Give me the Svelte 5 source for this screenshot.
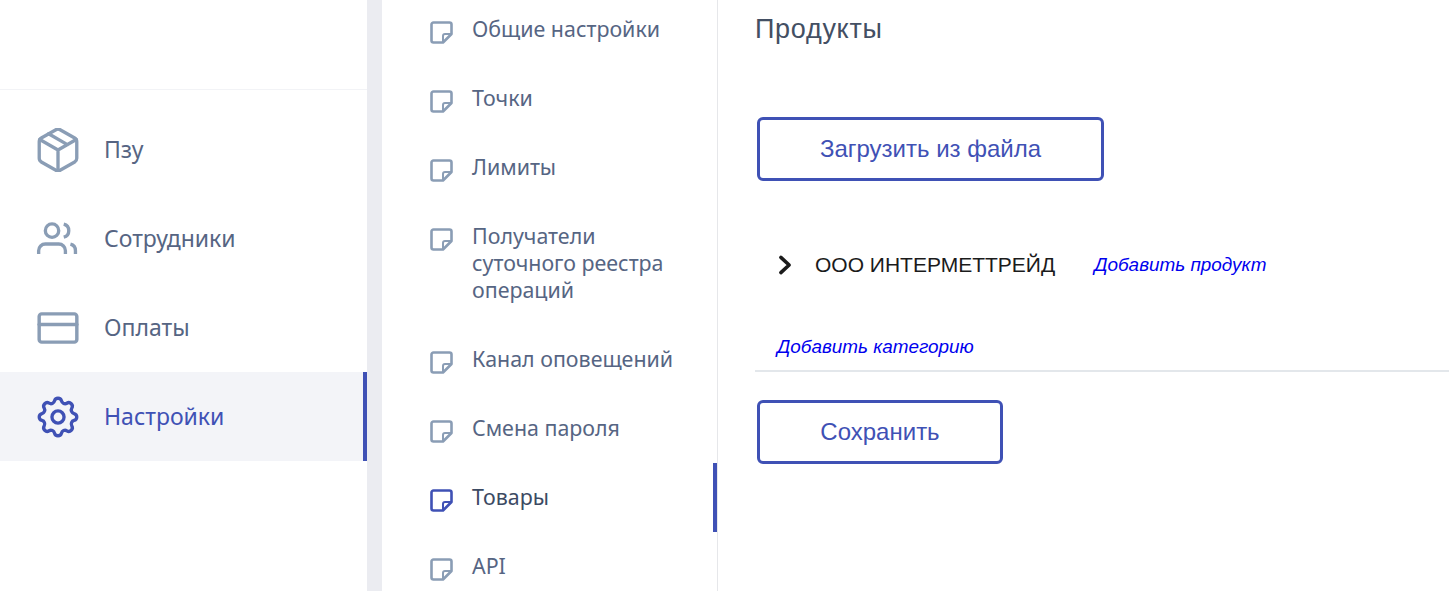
<script>
    const mainMenu = [
        { label: 'Пзу', icon: 'box', box: '1.45 1.45 21.1 21.1' },
        { label: 'Сотрудники', icon: 'users', box: '-0.58 -1.15 26.3 26.3' },
        { label: 'Оплаты', icon: 'card', box: '-0.85 -0.85 25.7 25.7' },
        { label: 'Настройки', icon: 'gear', box: '1.45 1.45 21.1 21.1', active: true },
    ];

    const subMenu = [
        { label: 'Общие настройки' },
        { label: 'Точки' },
        { label: 'Лимиты' },
        { label: 'Получатели суточного реестра операций' },
        { label: 'Канал оповещений' },
        { label: 'Смена пароля' },
        { label: 'Товары', active: true },
        { label: 'API' },
    ];
</script>

<div class="page">
    <aside class="sidebar">
        <nav class="main-menu">
            {#each mainMenu as item}
                <div class="main-item" class:active={item.active}>
                    <svg class="main-icon" viewBox={item.box} fill="none" stroke="currentColor" stroke-width="1.6" stroke-linecap="round" stroke-linejoin="round">
                        {#if item.icon === 'box'}
                            <path d="M21 16V8a2 2 0 0 0-1-1.730l-7-4a2 2 0 0 0-2 0l-7 4A2 2 0 0 0 3 8v8a2 2 0 0 0 1 1.730l7 4a2 2 0 0 0 2 0l7-4A2 2 0 0 0 21 16z" />
                            <path d="M3.270 6.960 12 12.010l8.730-5.050M12 22.080V12M7.500 4.210l9 5.190" />
                        {:else if item.icon === 'users'}
                            <g stroke-width="2" stroke-linecap="butt">
                                <circle cx="9" cy="7" r="4" />
                                <path d="M17 21v-2a4 4 0 0 0-4-4H5a4 4 0 0 0-4 4v2" />
                                <path d="M23 21v-2a4 4 0 0 0-3-3.870M16 3.130a4 4 0 0 1 0 7.750" />
                            </g>
                        {:else if item.icon === 'card'}
                            <g stroke-width="2">
                                <rect x="1" y="3.750" width="22" height="16.500" rx="1.500" />
                                <path d="M1 10h22" />
                            </g>
                        {:else}
                            <circle cx="12" cy="12" r="2.900" />
                            <path d="M10.325 4.317c.426-1.756 2.924-1.756 3.350 0a1.724 1.724 0 0 0 2.573 1.066c1.543-.94 3.310.826 2.370 2.370a1.724 1.724 0 0 0 1.065 2.572c1.756.426 1.756 2.924 0 3.350a1.724 1.724 0 0 0-1.066 2.573c.94 1.543-.826 3.310-2.370 2.370a1.724 1.724 0 0 0-2.572 1.065c-.426 1.756-2.924 1.756-3.350 0a1.724 1.724 0 0 0-2.573-1.066c-1.543.94-3.310-.826-2.370-2.370a1.724 1.724 0 0 0-1.065-2.572c-1.756-.426-1.756-2.924 0-3.350a1.724 1.724 0 0 0 1.066-2.573c-.94-1.543.826-3.310 2.370-2.370.996.608 2.296.07 2.572-1.065z" />
                        {/if}
                    </svg>
                    <span>{item.label}</span>
                </div>
            {/each}
        </nav>
    </aside>

    <div class="strip"></div>

    <nav class="sub-menu">
        {#each subMenu as item}
            <div class="sub-item" class:active={item.active}>
                <svg class="sub-icon" viewBox="0 0 23 23" fill="none" stroke="currentColor" stroke-width="2.600" stroke-linejoin="round">
                    <path d="M13 21.500H3.500a2 2 0 0 1-2-2v-16a2 2 0 0 1 2-2h16a2 2 0 0 1 2 2V13z" />
                    <path d="M21.500 13H15a2 2 0 0 0-2 2v6.500" stroke-width="2" />
                </svg>
                <span>{item.label}</span>
            </div>
        {/each}
    </nav>

    <main class="content">
        <h1>Продукты</h1>
        <button class="btn upload">Загрузить из файла</button>
        <div class="company">
            <svg class="chevron" viewBox="0 0 12 16" fill="none" stroke="currentColor" stroke-width="2.600" stroke-linecap="round" stroke-linejoin="round">
                <path d="M3 2.500 9 8l-6 5.500" />
            </svg>
            <span class="company-name">ООО ИНТЕРМЕТТРЕЙД</span>
            <a class="link" href="#add-product">Добавить продукт</a>
        </div>
        <div class="category">
            <a class="link" href="#add-category">Добавить категорию</a>
        </div>
        <button class="btn save">Сохранить</button>
    </main>
</div>

<style>
    :global(body) {
        margin: 0;
        background: #fff;
        overflow: hidden;
    }

    .page {
        display: flex;
        height: 591px;
        overflow: hidden;
        font-family: "Noto Sans", sans-serif;
    }

    .sidebar {
        width: 367px;
        flex-shrink: 0;
        padding-top: 89px;
        box-sizing: border-box;
    }

    .main-menu {
        border-top: 1px solid #f2f3f6;
        padding-top: 15px;
    }

    .main-item {
        display: flex;
        align-items: center;
        gap: 24px;
        height: 89px;
        padding-left: 36px;
        font-size: 23px;
        color: #566583;
        box-sizing: border-box;
    }

    .main-item .main-icon {
        color: #8a9db5;
    }

    .main-item.active {
        background: #f3f4f8;
        color: #3f51b5;
        border-right: 4px solid #3f51b5;
    }

    .main-item.active .main-icon {
        color: #3f51b5;
    }

    .main-icon {
        width: 44px;
        height: 44px;
        flex-shrink: 0;
    }

    .main-item span {
        margin-top: -2px;
    }

    .strip {
        width: 15px;
        flex-shrink: 0;
        background: #ebecf1;
    }

    .sub-menu {
        width: 336px;
        flex-shrink: 0;
        margin-top: -5px;
        border-right: 1px solid #e6e7ea;
        box-sizing: border-box;
    }

    .sub-item {
        display: flex;
        align-items: flex-start;
        gap: 19px;
        padding: 21px 30px 21px 48px;
        font-size: 21.4px;
        line-height: 27px;
        color: #566583;
    }

    .sub-item span {
        margin: -1px 0 1px;
    }

    .sub-item .sub-icon {
        color: #8a9db5;
    }

    .sub-item.active {
        color: #3c4a63;
        box-shadow: inset -4px 0 0 #3f51b5;
    }

    .sub-item.active .sub-icon {
        color: #3f51b5;
    }

    .sub-icon {
        width: 23px;
        height: 23px;
        margin: 5px 0 -1px;
        flex-shrink: 0;
    }

    .content {
        flex: 1;
        min-width: 0;
        padding-left: 37px;
        font-family: "Liberation Sans", Arial, sans-serif;
    }

    h1 {
        margin: 0;
        padding-top: 11px;
        font-size: 27px;
        font-weight: 400;
        letter-spacing: 0.7px;
        line-height: 36px;
        color: #434f63;
    }

    .btn {
        display: block;
        margin-left: 2px;
        height: 64px;
        border: 3px solid #3f51b5;
        border-radius: 6px;
        background: #fff;
        color: #3f51b5;
        font-family: "Liberation Sans", Arial, sans-serif;
        font-size: 24px;
        padding: 0;
    }

    .upload {
        width: 347px;
        margin-top: 70px;
    }

    .save {
        width: 246px;
        margin-top: 28px;
    }

    .company {
        display: flex;
        align-items: center;
        height: 36px;
        margin-top: 66px;
        padding-left: 21px;
        font-size: 21px;
        color: #1b1b1b;
    }

    .chevron {
        width: 18px;
        height: 22px;
        flex-shrink: 0;
    }

    .company-name {
        margin-left: 21px;
    }

    .company .link {
        margin-left: 39px;
    }

    .category {
        margin-top: 50px;
        padding: 0 0 10px 22px;
        height: 27px;
        border-bottom: 2px solid #e3e7eb;
        line-height: 27px;
    }

    .link {
        color: #0000ee;
        font-style: italic;
        font-size: 18.9px;
        text-decoration: none;
    }
</style>
